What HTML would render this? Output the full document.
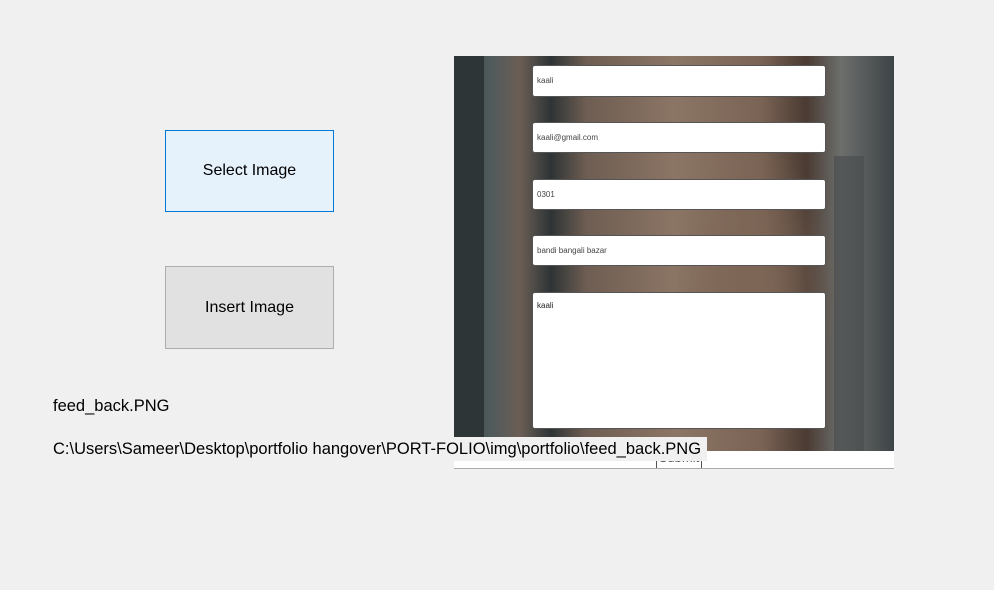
<!DOCTYPE html>
<html><head><style>
body{margin:0;width:994px;height:590px;background:#f0f0f0;font-family:"Liberation Sans",sans-serif;position:relative;overflow:hidden}
.abs{position:absolute}
.btn{position:absolute;left:165px;width:169px;display:flex;align-items:center;justify-content:center;font-size:16px;color:#000;box-sizing:border-box}
.photo{left:454px;top:56px;width:440px;height:395px;background:
radial-gradient(ellipse 120px 200px at 300px 230px,#7d6656 0%,transparent 70%),
linear-gradient(90deg,#3b3a3a 0%,#4e5a5c 8%,#6b5e55 15%,#2e3436 22%,#6e5d52 30%,#8b7565 50%,#7a6354 70%,#4a3b33 80%,#6c6e6c 88%,#3d4446 100%);overflow:hidden}
.f{position:absolute;left:78px;width:294px;background:#fff;border:1px solid #555;border-radius:3px;box-sizing:border-box;font-size:8px;color:#444;padding-left:4px}
</style></head><body>
<div class="btn" style="top:130px;height:82px;background:#e5f1fb;border:1px solid #0078d7">Select Image</div>
<div class="btn" style="top:266px;height:83px;background:#e1e1e1;border:1px solid #adadad">Insert Image</div>
<div class="abs" style="left:53px;top:397px;font-size:16.5px">feed_back.PNG</div>
<div class="abs photo">
<div class="abs" style="left:0;top:0;width:30px;height:395px;background:#2e3537"></div>
<div class="abs" style="left:380px;top:100px;width:30px;height:295px;background:#4c4f50;opacity:.7"></div>
<div class="f" style="top:9px;height:32px;line-height:30px">kaali</div>
<div class="f" style="top:66px;height:31px;line-height:29px">kaali@gmail.com</div>
<div class="f" style="top:123px;height:31px;line-height:29px">0301</div>
<div class="f" style="top:179px;height:31px;line-height:29px">bandi bangali bazar</div>
<div class="f" style="top:236px;height:137px;padding-top:8px;color:#222">kaali</div>
</div>
<div class="abs" style="left:454px;top:451px;width:440px;height:17px;background:#fff;border-bottom:1px solid #aaa"></div>
<div class="abs" style="left:656px;top:452px;width:44px;height:16px;border-left:1px solid #555;border-right:1px solid #555;font-size:13px;color:#555;text-align:center;overflow:hidden;line-height:12px">Submit</div>
<div class="abs" style="left:50px;top:437px;width:657px;height:24px;background:#f0f0f0"></div>
<div class="abs" style="left:53px;top:440px;font-size:16.5px;white-space:nowrap">C:\Users\Sameer\Desktop\portfolio hangover\PORT-FOLIO\img\portfolio\feed_back.PNG</div>
</body></html>
